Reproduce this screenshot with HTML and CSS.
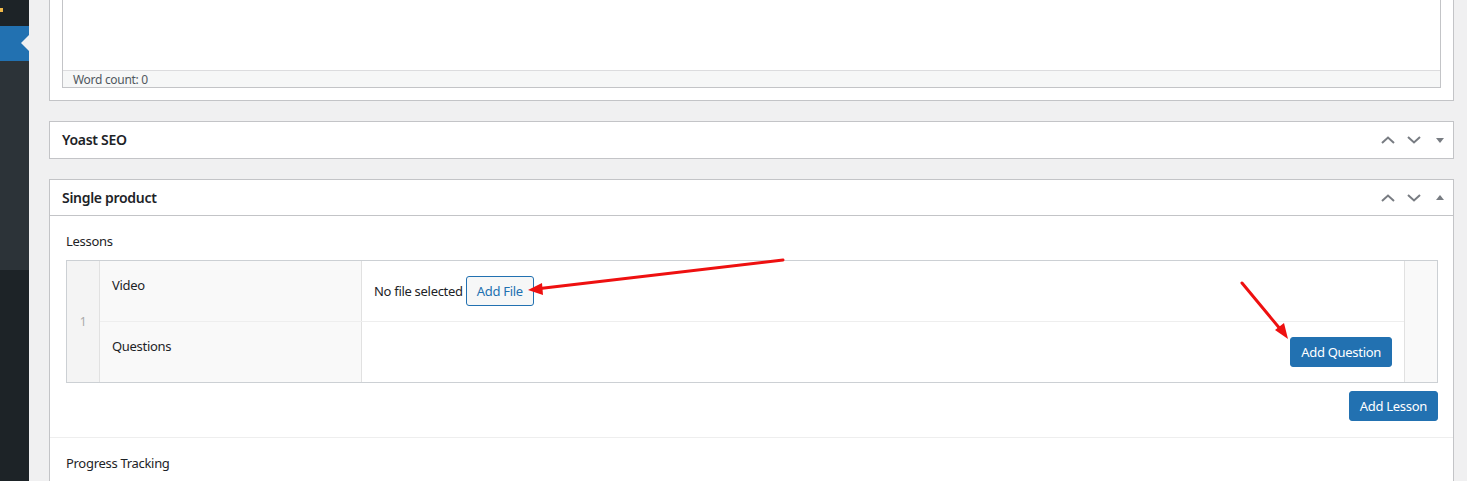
FILE: index.html
```html
<!DOCTYPE html>
<html lang="en">
<head>
<meta charset="utf-8">
<title>Edit product</title>
<link rel="stylesheet" href="styles.css">
</head>
<body>
<div class="wrap">
  <aside class="sidebar">
    <div class="sb-top"><span class="sb-mark"></span></div>
    <div class="sb-active"></div>
    <div class="sb-sub"></div>
    <div class="sb-rest"></div>
  </aside>
  <main class="content">
    <section class="postbox postbox-editor">
      <div class="editor">
        <div class="editor-area"></div>
        <div class="editor-status">Word count: 0</div>
      </div>
    </section>

    <section class="postbox">
      <div class="postbox-header closed">
        <h2 class="hndle">Yoast SEO</h2>
        <div class="handle-actions">
          <span class="handle-btn"><svg width="14" height="8" viewBox="0 0 14 8"><polyline points="1,7 7,1.5 13,7" fill="none" stroke="#787c82" stroke-width="2"/></svg></span>
          <span class="handle-btn"><svg width="14" height="8" viewBox="0 0 14 8"><polyline points="1,1 7,6.5 13,1" fill="none" stroke="#787c82" stroke-width="2"/></svg></span>
          <span class="handle-btn"><svg width="8" height="5" viewBox="0 0 8 5"><polygon points="0,0 8,0 4,5" fill="#787c82"/></svg></span>
        </div>
      </div>
    </section>

    <section class="postbox">
      <div class="postbox-header">
        <h2 class="hndle">Single product</h2>
        <div class="handle-actions">
          <span class="handle-btn"><svg width="14" height="8" viewBox="0 0 14 8"><polyline points="1,7 7,1.5 13,7" fill="none" stroke="#787c82" stroke-width="2"/></svg></span>
          <span class="handle-btn"><svg width="14" height="8" viewBox="0 0 14 8"><polyline points="1,1 7,6.5 13,1" fill="none" stroke="#787c82" stroke-width="2"/></svg></span>
          <span class="handle-btn"><svg width="8" height="5" viewBox="0 0 8 5"><polygon points="0,5 8,5 4,0" fill="#787c82"/></svg></span>
        </div>
      </div>
      <div class="inside">
        <div class="field">
          <div class="field-label">Lessons</div>
          <div class="repeater">
            <div class="row-num">1</div>
            <div class="rows">
              <div class="trow">
                <div class="tlabel">Video</div>
                <div class="tvalue"><span class="nofile">No file selected</span> <span class="button button-secondary">Add File</span></div>
              </div>
              <div class="trow">
                <div class="tlabel">Questions</div>
                <div class="tvalue tvalue-right"><span class="button button-primary">Add Question</span></div>
              </div>
            </div>
            <div class="row-handle"></div>
          </div>
          <div class="repeater-footer"><span class="button button-primary">Add Lesson</span></div>
        </div>
        <div class="field field-divided">
          <div class="field-label">Progress Tracking</div>
        </div>
      </div>
    </section>
  </main>
</div>
<svg class="annotations" width="1467" height="481" viewBox="0 0 1467 481">
  <line x1="783" y1="260" x2="540" y2="288.6" stroke="#ee1010" stroke-width="3" stroke-linecap="round"/>
  <polygon points="528,290 542,283 543,295" fill="#ee1010"/>
  <line x1="1242" y1="283" x2="1281" y2="330" stroke="#ee1010" stroke-width="3" stroke-linecap="round"/>
  <polygon points="1288,339 1275,330 1284,323" fill="#ee1010"/>
</svg>
</body>
</html>
```
FILE: styles.css
```css
* { box-sizing: border-box; }
html, body { margin: 0; padding: 0; }
body {
  background: #f0f0f1;
  font-family: "Noto Sans", "Open Sans", sans-serif;
  font-size: 13px;
  line-height: 18px;
  letter-spacing: -0.3px;
  color: #1d2327;
  position: relative;
  width: 1467px;
  height: 481px;
  overflow: hidden;
}
.wrap { display: flex; height: 481px; }

.sidebar { width: 29px; display: flex; flex-direction: column; flex-shrink: 0; }
.sb-top { height: 26px; background: #1d2327; position: relative; }
.sb-mark { display: block; width: 3px; height: 4px; background: #f0b849; margin-top: 8px; }
.sb-active { height: 35px; background: #2271b1; position: relative; }
.sb-active::after {
  content: "";
  position: absolute;
  right: 0;
  top: 9px;
  border-top: 8px solid transparent;
  border-bottom: 8px solid transparent;
  border-right: 8px solid #f0f0f1;
}
.sb-sub { height: 209px; background: #2c3338; }
.sb-rest { flex: 1; background: #1d2327; }

.content { flex: 1; padding: 0 13px 0 20px; }

.postbox {
  background: #fff;
  border: 1px solid #c3c4c7;
  margin-bottom: 20px;
}
.postbox-editor { border-top: none; padding: 0 12px 12px; }
.editor { border: 1px solid #c3c4c7; border-top: none; }
.editor-area { height: 70px; background: #fff; }
.editor-status {
  border-top: 1px solid #dcdcde;
  background: #f6f7f7;
  height: 17px;
  padding: 1px 0 0 10px;
  font-size: 12px;
  line-height: 15px;
  color: #50575e;
}

.postbox-header {
  display: flex;
  align-items: center;
  justify-content: space-between;
  height: 36px;
  border-bottom: 1px solid #c3c4c7;
}
.postbox-header.closed { border-bottom: none; }
.hndle {
  margin: 0;
  padding: 0 12px;
  font-size: 14px;
  font-weight: 600;
  line-height: 1.4;
  color: #1d2327;
}
.handle-actions { display: flex; height: 100%; }
.handle-btn {
  width: 26px;
  height: 100%;
  display: flex;
  align-items: center;
  justify-content: center;
}

.field { padding: 16px 15px 16px 16px; }
.field-divided { border-top: 1px solid #eeeeee; }
.field-label { color: #1d2327; margin-bottom: 10px; }

.repeater {
  display: flex;
  border: 1px solid #ccd0d4;
}
.row-num {
  width: 33px;
  background: #f4f4f4;
  border-right: 1px solid #e1e1e1;
  display: flex;
  align-items: center;
  justify-content: center;
  color: #aaaaaa;
  font-size: 12px;
}
.rows { flex: 1; display: flex; flex-direction: column; }
.trow { display: flex; height: 61px; border-bottom: 1px solid #eeeeee; }
.trow:last-child { height: 60px; border-bottom: none; }
.tlabel {
  width: 262px;
  background: #f9f9f9;
  border-right: 1px solid #e1e1e1;
  padding: 15px 12px;
  color: #1d2327;
}
.tvalue {
  flex: 1;
  padding: 15px 12px;
  color: #1d2327;
}
.nofile { display: inline-block; vertical-align: middle; }
.tvalue-right { text-align: right; }
.row-handle {
  width: 33px;
  background: #f9f9f9;
  border-left: 1px solid #e1e1e1;
}

.button {
  display: inline-block;
  vertical-align: middle;
  min-height: 30px;
  line-height: 28px;
  padding: 0 10px;
  font-size: 13px;
  border-radius: 3px;
  border: 1px solid #2271b1;
}
.button-secondary { background: #f6f7f7; color: #2271b1; }
.button-primary { background: #2271b1; color: #ffffff; }

.repeater-footer { display: flex; justify-content: flex-end; margin-top: 8px; }

.annotations { position: absolute; left: 0; top: 0; pointer-events: none; }
```
